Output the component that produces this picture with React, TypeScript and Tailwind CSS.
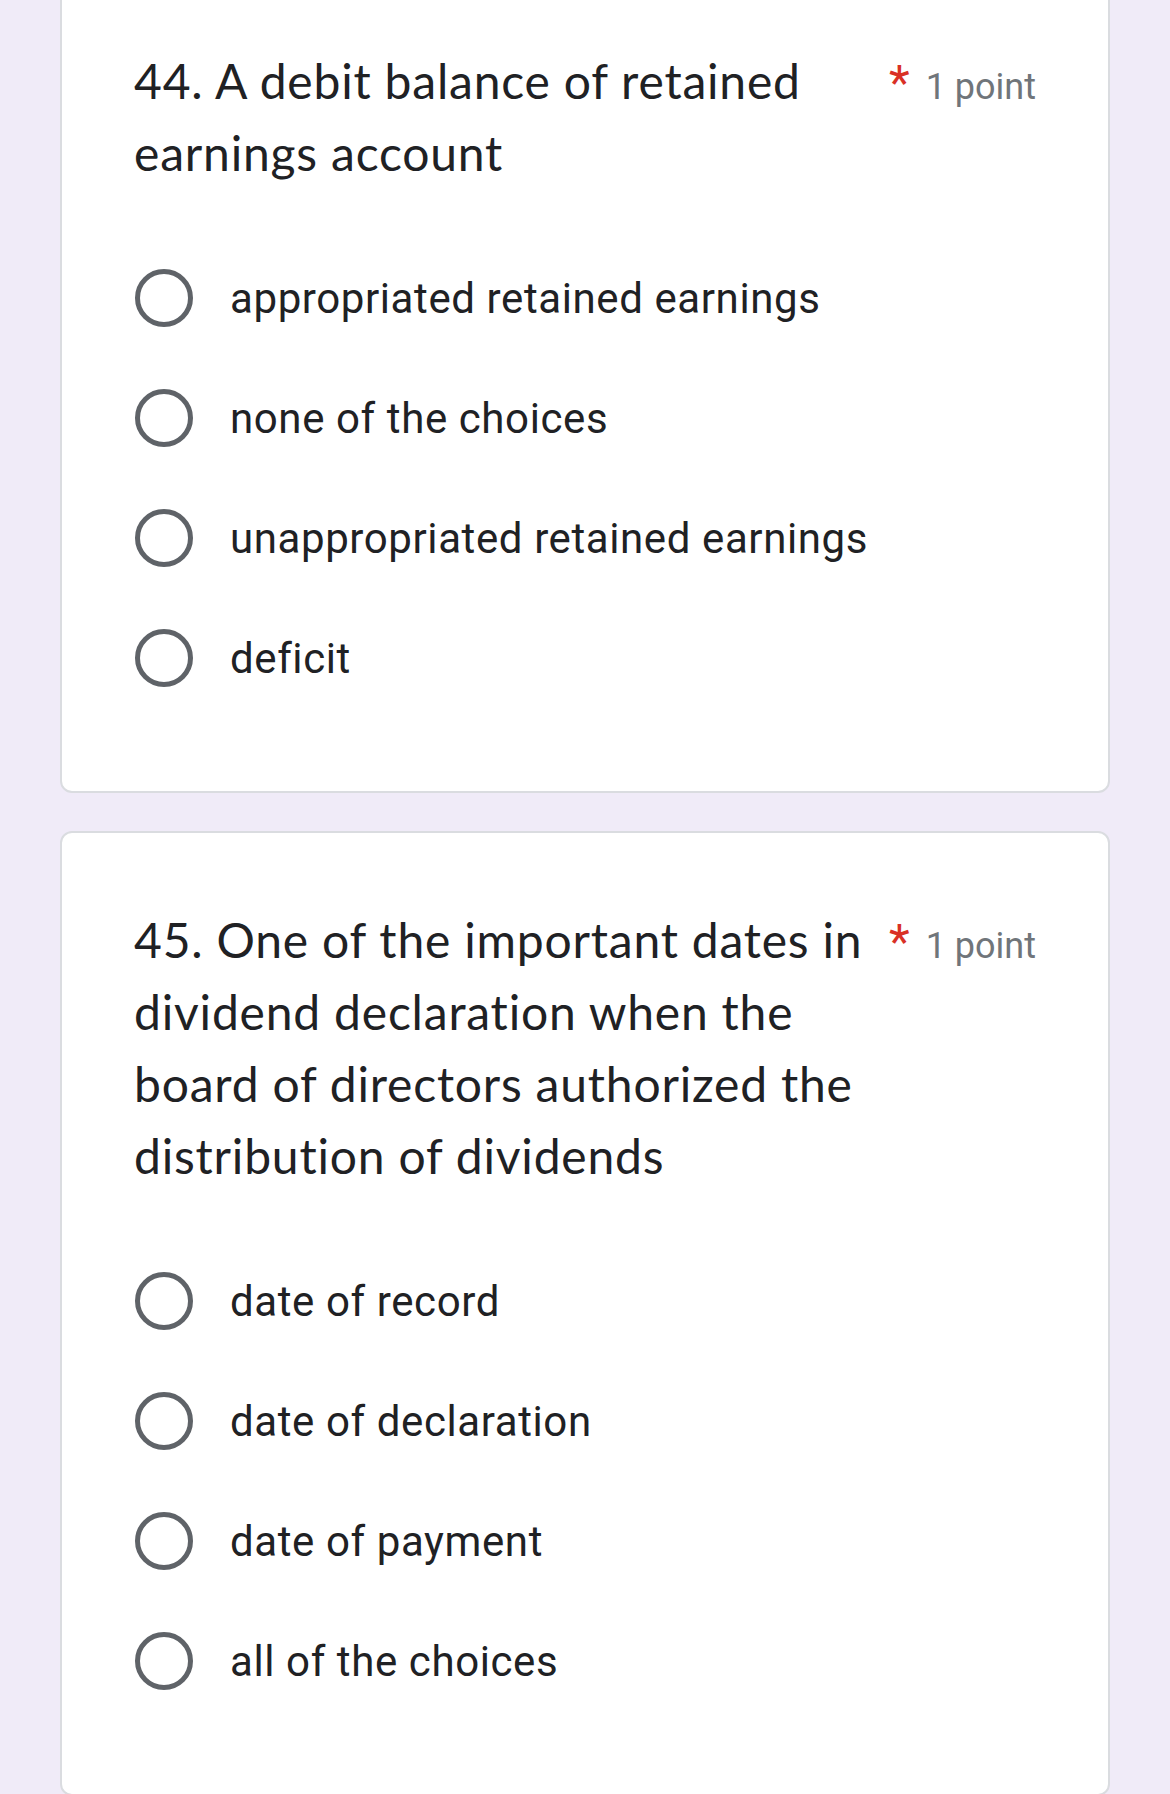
import React from 'react';

interface Question {
  title: string;
  points: string;
  choices: string[];
}

const questions: Question[] = [
  {
    title: '44. A debit balance of retained earnings account',
    points: '1 point',
    choices: [
      'appropriated retained earnings',
      'none of the choices',
      'unappropriated retained earnings',
      'deficit',
    ],
  },
  {
    title:
      '45. One of the important dates in dividend declaration when the board of directors authorized the distribution of dividends',
    points: '1 point',
    choices: ['date of record', 'date of declaration', 'date of payment', 'all of the choices'],
  },
];

const RadioOption: React.FC<{ label: string }> = ({ label }) => (
  <label className="flex h-[120px] items-center cursor-pointer">
    <span className="flex h-[60px] w-[60px] shrink-0 items-center justify-center">
      <span className="block h-[58px] w-[58px] rounded-full border-[5px] border-[#5f6368]" />
    </span>
    <span className="ml-[36px] font-['Roboto',sans-serif] text-[42px] tracking-[0.6px] text-[#202124]">
      {label}
    </span>
  </label>
);

const QuestionCard: React.FC<{ q: Question; first?: boolean }> = ({ q, first }) => (
  <div
    className={`rounded-[12px] border-2 border-[#dadce0] bg-white px-[72px] pb-[73px] ${
      first ? 'mt-[-28px] pt-[71px]' : 'pt-[71px]'
    }`}
  >
    <div className="flex items-baseline">
      <div className="min-w-0 flex-1 pr-[22px] font-['Lato',sans-serif] text-[48px] leading-[72px] tracking-[0.8px] text-[#202124]">
        {q.title}
      </div>
      <span className="ml-[4px] font-['Roboto',sans-serif] text-[48px] leading-[72px] text-[#d93025]">*</span>
      <span className="ml-[16px] font-['Roboto',sans-serif] text-[36px] text-[#70757a]">{q.points}</span>
    </div>
    <div className="mt-[49px] flex flex-col">
      {q.choices.map((c) => (
        <RadioOption key={c} label={c} />
      ))}
    </div>
  </div>
);

export default function App() {
  return (
    <div className="min-h-screen overflow-hidden bg-[#f0ebf8] px-[60px]">
      <div className="flex flex-col gap-[38px]">
        {questions.map((q, i) => (
          <QuestionCard key={i} q={q} first={i === 0} />
        ))}
      </div>
    </div>
  );
}
